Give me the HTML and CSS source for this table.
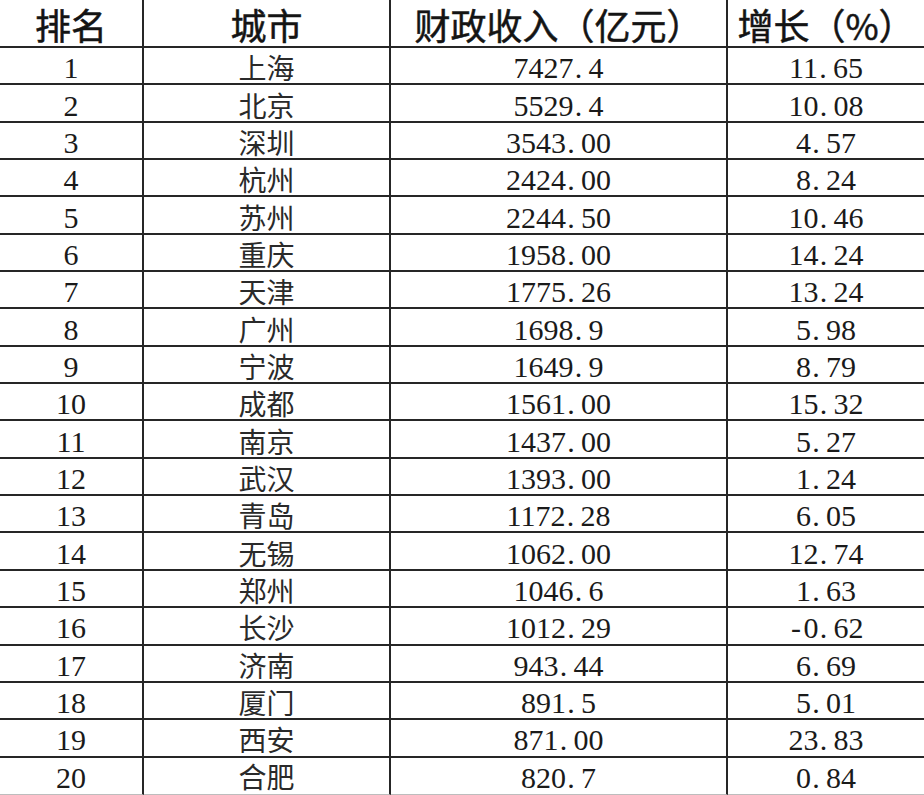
FILE: index.html
```html
<!DOCTYPE html>
<html lang="zh-CN">
<head>
<meta charset="utf-8">
<title>城市财政收入排名</title>
<link rel="stylesheet" href="styles.css">
</head>
<body>
<div class="sheet">
  <div class="row head">
    <div class="cell c1">排名</div>
    <div class="cell c2">城市</div>
    <div class="cell c3">财政收入（亿元）</div>
    <div class="cell c4">增长（%）</div>
  </div>
  <div class="row"><div class="cell c1 num">1</div><div class="cell c2 city">上海</div><div class="cell c3 num">7427<span class="dot">.</span>4</div><div class="cell c4 num">11<span class="dot">.</span>65</div></div>
  <div class="row"><div class="cell c1 num">2</div><div class="cell c2 city">北京</div><div class="cell c3 num">5529<span class="dot">.</span>4</div><div class="cell c4 num">10<span class="dot">.</span>08</div></div>
  <div class="row"><div class="cell c1 num">3</div><div class="cell c2 city">深圳</div><div class="cell c3 num">3543<span class="dot">.</span>00</div><div class="cell c4 num">4<span class="dot">.</span>57</div></div>
  <div class="row"><div class="cell c1 num">4</div><div class="cell c2 city">杭州</div><div class="cell c3 num">2424<span class="dot">.</span>00</div><div class="cell c4 num">8<span class="dot">.</span>24</div></div>
  <div class="row"><div class="cell c1 num">5</div><div class="cell c2 city">苏州</div><div class="cell c3 num">2244<span class="dot">.</span>50</div><div class="cell c4 num">10<span class="dot">.</span>46</div></div>
  <div class="row"><div class="cell c1 num">6</div><div class="cell c2 city">重庆</div><div class="cell c3 num">1958<span class="dot">.</span>00</div><div class="cell c4 num">14<span class="dot">.</span>24</div></div>
  <div class="row"><div class="cell c1 num">7</div><div class="cell c2 city">天津</div><div class="cell c3 num">1775<span class="dot">.</span>26</div><div class="cell c4 num">13<span class="dot">.</span>24</div></div>
  <div class="row"><div class="cell c1 num">8</div><div class="cell c2 city">广州</div><div class="cell c3 num">1698<span class="dot">.</span>9</div><div class="cell c4 num">5<span class="dot">.</span>98</div></div>
  <div class="row"><div class="cell c1 num">9</div><div class="cell c2 city">宁波</div><div class="cell c3 num">1649<span class="dot">.</span>9</div><div class="cell c4 num">8<span class="dot">.</span>79</div></div>
  <div class="row"><div class="cell c1 num">10</div><div class="cell c2 city">成都</div><div class="cell c3 num">1561<span class="dot">.</span>00</div><div class="cell c4 num">15<span class="dot">.</span>32</div></div>
  <div class="row"><div class="cell c1 num">11</div><div class="cell c2 city">南京</div><div class="cell c3 num">1437<span class="dot">.</span>00</div><div class="cell c4 num">5<span class="dot">.</span>27</div></div>
  <div class="row"><div class="cell c1 num">12</div><div class="cell c2 city">武汉</div><div class="cell c3 num">1393<span class="dot">.</span>00</div><div class="cell c4 num">1<span class="dot">.</span>24</div></div>
  <div class="row"><div class="cell c1 num">13</div><div class="cell c2 city">青岛</div><div class="cell c3 num">1172<span class="dot">.</span>28</div><div class="cell c4 num">6<span class="dot">.</span>05</div></div>
  <div class="row"><div class="cell c1 num">14</div><div class="cell c2 city">无锡</div><div class="cell c3 num">1062<span class="dot">.</span>00</div><div class="cell c4 num">12<span class="dot">.</span>74</div></div>
  <div class="row"><div class="cell c1 num">15</div><div class="cell c2 city">郑州</div><div class="cell c3 num">1046<span class="dot">.</span>6</div><div class="cell c4 num">1<span class="dot">.</span>63</div></div>
  <div class="row"><div class="cell c1 num">16</div><div class="cell c2 city">长沙</div><div class="cell c3 num">1012<span class="dot">.</span>29</div><div class="cell c4 num"><span class="dash">-</span>0<span class="dot">.</span>62</div></div>
  <div class="row"><div class="cell c1 num">17</div><div class="cell c2 city">济南</div><div class="cell c3 num">943<span class="dot">.</span>44</div><div class="cell c4 num">6<span class="dot">.</span>69</div></div>
  <div class="row"><div class="cell c1 num">18</div><div class="cell c2 city">厦门</div><div class="cell c3 num">891<span class="dot">.</span>5</div><div class="cell c4 num">5<span class="dot">.</span>01</div></div>
  <div class="row"><div class="cell c1 num">19</div><div class="cell c2 city">西安</div><div class="cell c3 num">871<span class="dot">.</span>00</div><div class="cell c4 num">23<span class="dot">.</span>83</div></div>
  <div class="row last"><div class="cell c1 num">20</div><div class="cell c2 city">合肥</div><div class="cell c3 num">820<span class="dot">.</span>7</div><div class="cell c4 num">0<span class="dot">.</span>84</div></div>
</div>
</body>
</html>
```

FILE: styles.css
```css
html, body {
  margin: 0;
  padding: 0;
  background: #ffffff;
}

body {
  width: 924px;
  height: 795px;
  overflow: hidden;
  color: #111111;
  font-family: "Liberation Serif", "Noto Sans CJK SC", serif;
}

.sheet {
  display: grid;
  grid-template-columns: 144px 247px 337px 196px;
  grid-template-rows: 48px repeat(20, 37.35px);
  width: 924px;
  height: 795px;
}

.row {
  display: contents;
}

.cell {
  box-sizing: border-box;
  display: flex;
  align-items: center;
  justify-content: center;
  border-bottom: 2px solid #262626;
  padding-top: 5px;
  white-space: nowrap;
  line-height: 1;
}

.c1, .c2, .c3 {
  border-right: 2px solid #262626;
}

.last .cell {
  border-bottom-color: #bdbdbd;
  border-bottom-width: 1px;
  padding-top: 4px;
}

.head .cell {
  font-family: "Noto Sans CJK SC", sans-serif;
  font-size: 36px;
  font-weight: 400;
  -webkit-text-stroke: 0.5px #141414;
  line-height: 1.15;
  padding-top: 4px;
  color: #141414;
}

.num {
  font-family: "Liberation Serif", serif;
  font-size: 30px;
  color: #1a1a1a;
}

.city {
  font-family: "Noto Sans CJK SC", sans-serif;
  font-size: 28px;
  font-weight: 400;
  color: #2a2a2a;
  padding-top: 3px;
}

.last .city {
  padding-top: 1px;
}

.dot {
  display: inline-block;
  width: 0.5em;
  text-align: left;
  padding-left: 0.04em;
  box-sizing: border-box;
}

.dash {
  display: inline-block;
  width: 0.5em;
  text-align: center;
}
```
